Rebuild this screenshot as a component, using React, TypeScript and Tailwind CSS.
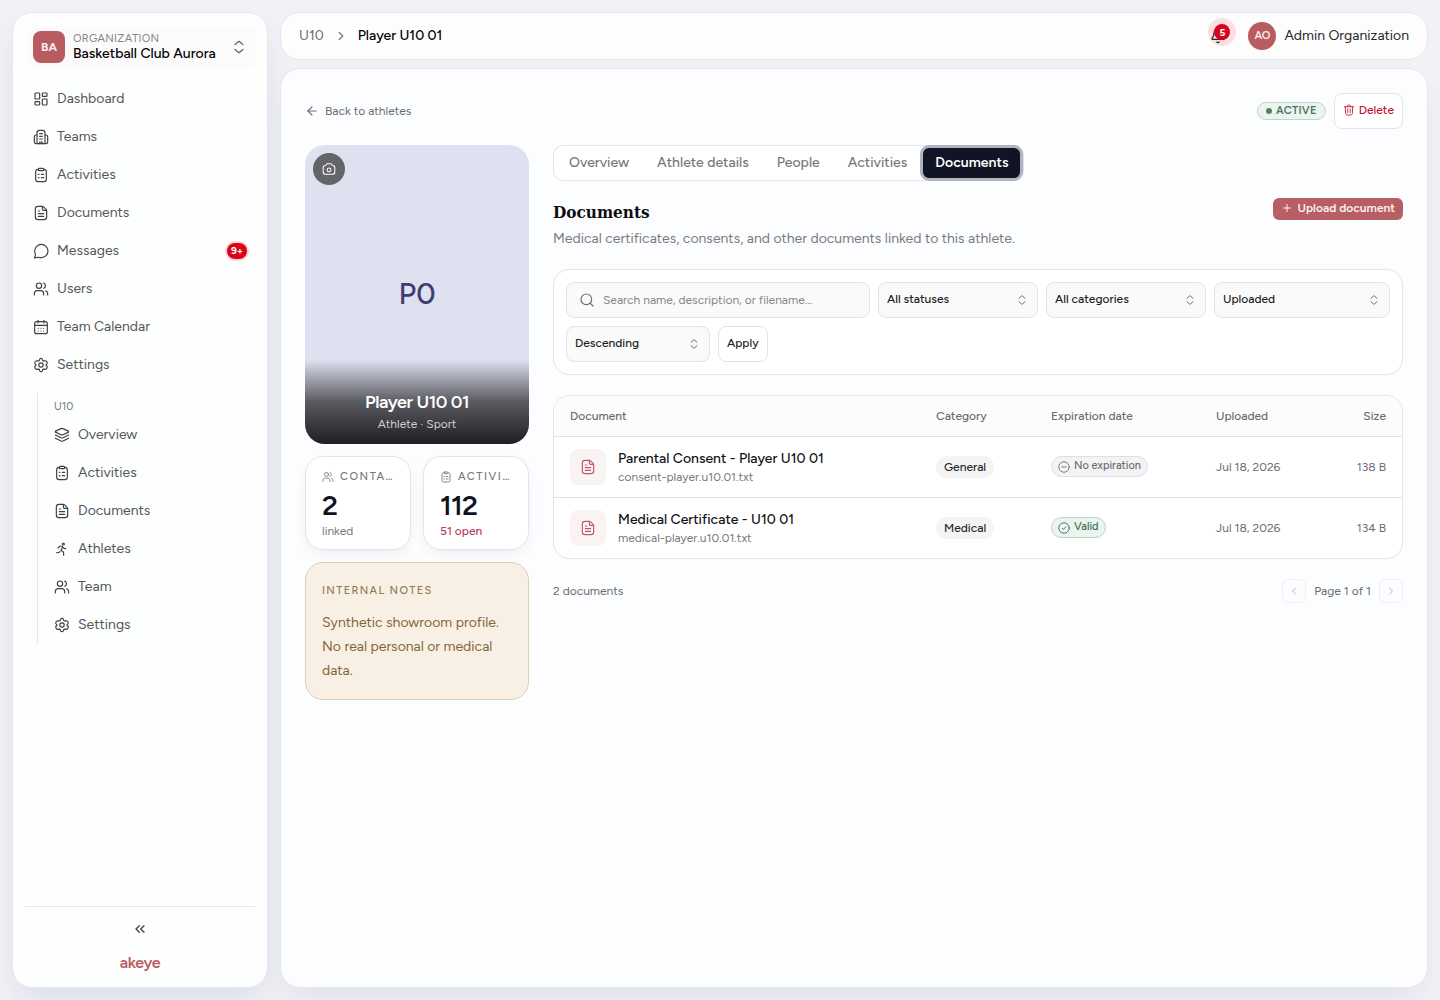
import type { ReactNode } from "react";
import {
  ArrowLeft,
  Bell,
  ChevronLeft,
  ChevronRight,
  ChevronsLeft,
  LayoutDashboard,
  Plus,
  Search,
} from "lucide-react";

type IconProps = { className?: string };

function Icon({ children, className = "size-4" }: { children: ReactNode; className?: string }) {
  return (
    <svg
      viewBox="0 0 24 24"
      fill="none"
      stroke="currentColor"
      strokeWidth={1.75}
      strokeLinecap="round"
      strokeLinejoin="round"
      className={`shrink-0 ${className}`}
      aria-hidden="true"
    >
      {children}
    </svg>
  );
}

const DashboardIcon = ({ className = "size-4" }: IconProps) => (
  <LayoutDashboard className={className} strokeWidth={1.75} />
);

const ClipboardIcon = ({ className }: IconProps) => (
  <Icon className={className}>
    <path d="M8 3.500H7.500C5 3.500 4 4.700 4 7v11.500C4 20.800 5.200 22 7.500 22h9c2.300 0 3.500-1.200 3.500-3.500V7c0-2.300-1-3.500-3.500-3.500H16" />
    <rect x="8" y="2" width="8" height="3.500" rx="1.500" />
    <path d="M12.500 11H16M12.500 16H16M8 11h1M8 16h1" />
  </Icon>
);

const BuildingIcon = ({ className }: IconProps) => (
  <Icon className={className}>
    <path d="M6 22V6c0-2.500 1-4 3.500-4h5C17 2 18 3.500 18 6v16" />
    <path d="M6 9H4.500C2.800 9 2 9.800 2 11.500v8C2 21.200 2.800 22 4.500 22h15c1.700 0 2.500-.8 2.500-2.500v-8C22 9.800 21.200 9 19.500 9H18" />
    <path d="M10 7h4M10 11h4M10 15h4M10 22v-2.500h4V22" />
  </Icon>
);

const FileIcon = ({ className }: IconProps) => (
  <Icon className={className}>
    <path d="M3.500 6c0-2.600 1.400-4 4-4h6.300c.8 0 1.500.3 2.100.9l3.700 3.700c.6.600.9 1.300.9 2.100V18c0 2.600-1.400 4-4 4h-9c-2.600 0-4-1.400-4-4z" />
    <path d="M14 2.500V6c0 1.400.6 2 2 2h4M8 17h8M8 13h8M8 9h2" />
  </Icon>
);

const ChatIcon = ({ className }: IconProps) => (
  <Icon className={className}>
    <path d="M12.500 22C18 22 22.500 17.500 22.500 12S18 2 12.500 2 2.500 6.500 2.500 12c0 1.600.3 2.900.9 4.200.4.800.4 1.300.2 2.100L2 22.500l4.300-1c.8-.2 1.300-.2 2.100.1 1.300.3 2.600.4 4.100.4z" />
  </Icon>
);

const UsersIcon = ({ className }: IconProps) => (
  <Icon className={className}>
    <circle cx="9" cy="7" r="4" />
    <path d="M2 21v-2c0-2.600 1.700-4.500 4.500-4.500h5c2.800 0 4.500 1.900 4.500 4.500v2" />
    <path d="M16 3.200a4 4 0 0 1 0 7.600M19 14.800c1.900.6 3 2.200 3 4.200v2" />
  </Icon>
);

const CalendarIcon = ({ className }: IconProps) => (
  <Icon className={className}>
    <rect x="2.500" y="4" width="19" height="18" rx="3" />
    <path d="M7.500 2v4M16.500 2v4M3 9.500h18M8 14h.01M12 14h.01M16 14h.01M8 18h.01M12 18h.01M16 18h.01" />
  </Icon>
);

const GearIcon = ({ className }: IconProps) => (
  <Icon className={className}>
    <circle cx="12" cy="12" r="3.300" />
    <path d="M13.900 3.200 14.500 5c.2.500.7.800 1.200.9l2.600-.3c1 0 1.600.3 2.100 1.100l.7 1.300c.5.900.4 1.600-.1 2.300l-1.300 1.100c-.4.400-.4.900 0 1.300l1.300 1.100c.5.700.6 1.400.1 2.300l-.7 1.300c-.5.800-1.100 1.100-2.100 1.100l-2.600-.3c-.5.100-1 .4-1.200.9l-.6 1.800c-.3.700-.8 1.100-1.900 1.100s-1.600-.4-1.900-1.100l-.6-1.800c-.2-.5-.7-.8-1.200-.9l-2.600.3c-1 0-1.600-.3-2.100-1.100l-.7-1.300c-.5-.9-.4-1.600.1-2.300l1.300-1.100c.4-.4.4-.9 0-1.300L3 10.300c-.5-.7-.6-1.400-.1-2.300l.7-1.300c.5-.8 1.100-1.100 2.100-1.100l2.600.3c.5-.1 1-.4 1.200-.9l.6-1.800c.3-.7.8-1.100 1.900-1.100s1.600.4 1.900 1.100z" />
  </Icon>
);

const LayersIcon = ({ className }: IconProps) => (
  <Icon className={className}>
    <path d="M10.600 2.400 3 5.800c-1.300.6-1.300 1.700 0 2.300l7.600 3.400c.9.400 1.900.4 2.800 0L21 8.100c1.300-.6 1.300-1.700 0-2.300l-7.600-3.400c-.9-.4-1.900-.4-2.800 0z" />
    <path d="m2 12 8.600 4.200c.9.400 1.900.4 2.800 0L22 12M2 16.800l8.600 4.300c.9.400 1.900.4 2.800 0l8.600-4.300" />
  </Icon>
);

const RunnerIcon = ({ className }: IconProps) => (
  <Icon className={className}>
    <circle cx="14" cy="4.500" r="1.500" />
    <path d="M6 10.500 8.500 8c1.500-.8 3-.5 4.500.5L10.500 14l3.500 2.500c.5 1.500.5 3 .5 5M13 9c.8 1.800 2.500 2.500 4.500 2.500M9 16c-1.300 2-2.500 2-5 1.500" />
  </Icon>
);

const CameraIcon = ({ className }: IconProps) => (
  <Icon className={className}>
    <path d="M2 9.500C2 7.500 3.200 6.300 5 6.200c1-.1 1.600-.5 2-1.300.6-1.300 1.300-1.900 2.600-1.900h4.800c1.300 0 2 .6 2.600 1.900.4.800 1 1.200 2 1.300 1.800.1 3 1.300 3 3.300V17c0 2.600-1.300 4-4 4H6c-2.700 0-4-1.400-4-4z" />
    <circle cx="12" cy="13.500" r="3.300" />
  </Icon>
);

const TrashIcon = ({ className }: IconProps) => (
  <Icon className={className}>
    <path d="m19.500 5.500-.8 12.600c-.2 2.700-1.200 3.900-3.700 3.900H9c-2.500 0-3.500-1.200-3.700-3.900L4.500 5.500M3 5.500h18M16 5.500l-.9-2C14.700 2.500 14 2 13 2h-2c-1 0-1.700.5-2.100 1.500l-.9 2M9.500 10v7M14.500 10v7" />
  </Icon>
);

const SortIcon = ({ className }: IconProps) => (
  <Icon className={className}>
    <path d="m6 8.500 5-4.400c.6-.5 1.400-.5 2 0l5 4.400M6 15.500l5 4.400c.6.500 1.400.5 2 0l5-4.400" />
  </Icon>
);

const mainNav = [
  { label: "Dashboard", icon: DashboardIcon },
  { label: "Teams", icon: BuildingIcon },
  { label: "Activities", icon: ClipboardIcon },
  { label: "Documents", icon: FileIcon },
  { label: "Messages", icon: ChatIcon, badge: "9+" },
  { label: "Users", icon: UsersIcon },
  { label: "Team Calendar", icon: CalendarIcon },
  { label: "Settings", icon: GearIcon },
];

const teamNav = [
  { label: "Overview", icon: LayersIcon },
  { label: "Activities", icon: ClipboardIcon },
  { label: "Documents", icon: FileIcon },
  { label: "Athletes", icon: RunnerIcon },
  { label: "Team", icon: UsersIcon },
  { label: "Settings", icon: GearIcon },
];

const tabs = ["Overview", "Athlete details", "People", "Activities", "Documents"];

const documents = [
  {
    title: "Parental Consent - Player U10 01",
    file: "consent-player.u10.01.txt",
    category: "General",
    valid: false,
    uploaded: "Jul 18, 2026",
    size: "138 B",
  },
  {
    title: "Medical Certificate - U10 01",
    file: "medical-player.u10.01.txt",
    category: "Medical",
    valid: true,
    uploaded: "Jul 18, 2026",
    size: "134 B",
  },
];

type NavItem = { label: string; icon: (props: IconProps) => ReactNode; badge?: string };

function NavLink({ label, icon: ItemIcon, badge }: NavItem) {
  return (
    <a href="#" className="flex h-9 items-center gap-2 px-2 text-sm text-[#55565a]">
      <ItemIcon className="size-4 text-[#3f4044]" />
      <span className="flex-1">{label}</span>
      {badge && (
        <span className="flex h-4 items-center rounded-full bg-[#d9041c] px-1 text-[10px] font-bold text-white ring-2 ring-[#fbd5d9]">
          {badge}
        </span>
      )}
    </a>
  );
}

function Sidebar() {
  return (
    <aside className="flex w-64 shrink-0 flex-col rounded-[20px] border border-[#e6e7ec] bg-[#fdfefe] px-3 shadow-[0_16px_32px_-8px_rgba(60,70,110,0.14)]">
      <button className="ml-1 mt-[13px] flex items-center gap-2 rounded-md bg-[#fbfbfb] px-1 py-[5px] text-left">
        <span className="flex size-8 items-center justify-center rounded-lg bg-[#b85c62] text-xs font-bold text-[#fdeeee]">
          BA
        </span>
        <span className="flex-1">
          <span className="block text-[11px] leading-[14px] tracking-wide text-[#85868a]">ORGANIZATION</span>
          <span className="block text-sm leading-4 font-medium text-black">Basketball Club Aurora</span>
        </span>
        <SortIcon className="mr-1 size-4 text-[#55565a]" />
      </button>

      <nav className="ml-1 mt-[13px] flex flex-col gap-0.5 pr-1 [&>a]:px-1">
        {mainNav.map((item) => (
          <NavLink key={item.label} {...item} />
        ))}
      </nav>

      {/* Selected team */}
      <div className="mt-2.5 ml-3 border-l border-[#e3e4e8] pl-2">
        <p className="flex h-6 items-end pl-2 text-[11px] leading-5 text-[#7a7b80]">U10</p>
        <nav className="flex flex-col gap-0.5">
          {teamNav.map((item) => (
            <NavLink key={item.label} {...item} />
          ))}
        </nav>
      </div>

      <div className="mt-auto flex flex-col items-center border-t border-[#e6e7ea] py-3.5">
        <button aria-label="Collapse sidebar" className="text-[#3f4044]">
          <ChevronsLeft className="size-4" />
        </button>
        <a href="#" className="mt-4 text-base leading-5 font-semibold tracking-tight text-[#b85c62]">
          akeye
        </a>
      </div>
    </aside>
  );
}

function Header() {
  return (
    <header className="flex h-12 items-center justify-between rounded-[20px] border border-[#e6e7ec] bg-[#fdfdfe] px-[18px]">
      <nav aria-label="Breadcrumb" className="flex items-center gap-2.5 text-sm">
        <a href="#" className="text-[#6b6c71]">U10</a>
        <ChevronRight className="size-3.5 text-[#77787d]" />
        <span className="font-medium text-black">Player U10 01</span>
      </nav>
      <div className="flex items-center">
        <button aria-label="Notifications, 5 unread" className="relative mr-[22px] flex size-4 items-center justify-center">
          <span className="absolute -top-2.5 -right-2.5 size-7 rounded-full bg-[#fbdfe3]" />
          <Bell className="relative size-4 text-[#26272b]" strokeWidth={2} />
          <span className="absolute -top-1 -right-1 flex size-4 items-center justify-center rounded-full bg-[#d9041c] text-[10px] font-bold text-white">
            5
          </span>
        </button>
        <button className="flex items-center gap-2 text-sm text-[#26272b]">
          <span className="flex size-7 items-center justify-center rounded-full bg-[#b85c62] text-[11px] font-semibold text-[#fdeeee]">
            AO
          </span>
          Admin Organization
        </button>
      </div>
    </header>
  );
}

type StatProps = { icon: ReactNode; label: string; value: string; note: string; noteClass: string };

function StatCard({ icon, label, value, note, noteClass }: StatProps) {
  return (
    <div className="min-w-0 rounded-[18px] border border-[#e2e4ea] bg-white px-4 pt-3 pb-2.5 shadow-[0_6px_16px_-6px_rgba(40,50,90,0.12)]">
      <div className="flex items-center gap-1.5 text-[#77787d]">
        {icon}
        <span className="truncate text-[11px] leading-4 font-medium tracking-[0.14em] uppercase">{label}</span>
      </div>
      <p className="mt-0.5 text-[28px] leading-9 font-semibold tracking-tight text-[#0f1222]">{value}</p>
      <p className={`text-xs leading-4 ${noteClass}`}>{note}</p>
    </div>
  );
}

function ProfileColumn() {
  return (
    <div className="flex w-56 shrink-0 flex-col gap-3">
      <div className="relative flex aspect-3/4 items-center justify-center overflow-hidden rounded-[20px] bg-[#dfe0f0]">
        <span className="text-[30px] leading-10 font-medium text-[#3b3f70]">P0</span>
        <button
          aria-label="Change photo"
          className="absolute top-2 left-2 flex size-8 items-center justify-center rounded-full bg-[#646569] text-white"
        >
          <CameraIcon className="size-3.5" />
        </button>
        <div className="absolute inset-x-0 bottom-0 bg-linear-to-t from-[#1f1f22] via-[#1f1f22]/70 to-transparent px-4 pt-7 pb-3 text-center">
          <h1 className="text-lg leading-7 font-semibold tracking-tight text-white">Player U10 01</h1>
          <p className="text-xs leading-4 text-[#d0d0d3]">Athlete · Sport</p>
        </div>
      </div>

      <div className="grid grid-cols-2 gap-3">
        <StatCard
          icon={<UsersIcon className="size-3" />}
          label="Contacts"
          value="2"
          note="linked"
          noteClass="text-[#77787d]"
        />
        <StatCard
          icon={<ClipboardIcon className="size-3" />}
          label="Activities"
          value="112"
          note="51 open"
          noteClass="font-medium text-[#b9405a]"
        />
      </div>

      <section className="rounded-[18px] border border-[#dccfae] bg-[#f8f0e5] px-4 pt-5 pb-4">
        <h2 className="text-[11px] leading-4 font-medium tracking-[0.12em] text-[#937b50] uppercase">
          Internal notes
        </h2>
        <p className="mt-3 text-sm leading-6 text-[#856537]">
          Synthetic showroom profile. No real personal or medical data.
        </p>
      </section>
    </div>
  );
}

function FilterSelect({ label, value, className }: { label: string; value: string; className: string }) {
  return (
    <div className={`relative ${className}`}>
      <select
        aria-label={label}
        className="h-9 w-full appearance-none rounded-lg border border-[#e3e4e6] bg-[#fafafa] px-2 pb-0.5 text-xs font-medium text-[#1c1d20]"
      >
        <option>{value}</option>
      </select>
      <SortIcon className="pointer-events-none absolute top-3 right-2.5 size-3 text-[#55565a]" />
    </div>
  );
}

function Filters() {
  return (
    <form
      onSubmit={(e) => e.preventDefault()}
      className="mt-5 flex flex-wrap gap-2 rounded-[16px] border border-[#e2e4e8] bg-white p-3"
    >
      <div className="flex h-9 min-w-60 flex-1 items-center gap-2 rounded-lg border border-[#e3e4e6] bg-[#fafafa] px-3">
        <Search className="size-4 text-[#6b6c71]" strokeWidth={1.75} />
        <input
          type="search"
          aria-label="Search documents"
          placeholder="Search name, description, or filename…"
          className="min-w-0 flex-1 bg-transparent text-xs outline-none placeholder:text-[#85868a]"
        />
      </div>
      <FilterSelect label="Status" value="All statuses" className="w-40" />
      <FilterSelect label="Category" value="All categories" className="w-40" />
      <FilterSelect label="Sort by" value="Uploaded" className="w-44" />
      <div className="flex w-full gap-2">
        <FilterSelect label="Order" value="Descending" className="w-36" />
        <button className="h-9 rounded-lg border border-[#e3e4e6] bg-white px-2 pb-0.5 text-xs font-medium text-[#1c1d20]">
          Apply
        </button>
      </div>
    </form>
  );
}

function ValidityBadge({ valid }: { valid: boolean }) {
  return (
    <span
      className={`inline-flex h-[21px] items-center gap-1 rounded-full border px-1.5 text-[11px] font-medium ${
        valid ? "border-[#b8d4c4] bg-[#e9f5ee] text-[#3f6b52]" : "border-[#dfdfe3] bg-[#f3f3f5] text-[#6b6c71]"
      }`}
    >
      <Icon className="size-3">
        <circle cx="12" cy="12" r="10.500" />
        {valid ? <path d="m8.500 12.500 2.300 2.300 4.700-5" /> : <path d="M7.500 12h9" />}
      </Icon>
      {valid ? "Valid" : "No expiration"}
    </span>
  );
}

function DocumentsTable() {
  return (
    <div className="mt-5 overflow-hidden rounded-[16px] border border-[#e2e4e8] bg-white">
      <table className="w-full table-fixed text-left text-xs text-[#6b6c71]">
        <thead className="bg-[#fcfcfc]">
          <tr className="h-10 border-b border-[#e2e3e6] [&>th]:px-4 [&>th]:font-medium">
            <th>Document</th>
            <th className="w-[115px]">Category</th>
            <th className="w-[165px]">Expiration date</th>
            <th className="w-[101px]">Uploaded</th>
            <th className="w-[101px] text-right">Size</th>
          </tr>
        </thead>
        <tbody>
          {documents.map((doc) => (
            <tr key={doc.file} className="h-[61px] border-b border-[#e2e3e6] last:border-b-0 [&>td]:px-4">
              <td>
                <div className="flex items-center gap-3">
                  <span className="flex size-9 items-center justify-center rounded-lg bg-[#f9f3f4] text-[#b85c68]">
                    <FileIcon className="size-4" />
                  </span>
                  <div>
                    <a href="#" className="block text-sm leading-5 font-medium text-[#101114]">
                      {doc.title}
                    </a>
                    <p className="text-xs leading-4 text-[#77787d]">{doc.file}</p>
                  </div>
                </div>
              </td>
              <td>
                <span className="inline-flex h-[22px] items-center rounded-full bg-[#f4f4f5] px-2 font-medium text-[#26272b]">
                  {doc.category}
                </span>
              </td>
              <td>
                <ValidityBadge valid={doc.valid} />
              </td>
              <td className="whitespace-nowrap">{doc.uploaded}</td>
              <td className="text-right">{doc.size}</td>
            </tr>
          ))}
        </tbody>
      </table>
    </div>
  );
}

function DocumentsPanel() {
  return (
    <div className="min-w-0 flex-1">
      <div
        role="tablist"
        className="inline-flex h-9 items-center gap-1 rounded-[10px] border border-[#e2e4ea] bg-white px-[3px] align-top"
      >
        {tabs.map((tab) =>
          tab === "Documents" ? (
            <button
              key={tab}
              role="tab"
              aria-selected="true"
              className="h-[30px] rounded-md bg-[#101425] px-3 text-sm font-semibold text-white ring-3 ring-[#b1b3bf]"
            >
              {tab}
            </button>
          ) : (
            <button
              key={tab}
              role="tab"
              aria-selected="false"
              className="h-[30px] rounded-md px-3 text-sm font-medium text-[#77787d]"
            >
              {tab}
            </button>
          ),
        )}
      </div>

      <div className="mt-[17px] flex items-start justify-between">
        <div>
          <h2 className="font-['Roboto_Slab','DejaVu_Serif_Condensed','DejaVu_Serif',serif] text-[17px] leading-7 font-semibold text-[#0c0d10]">
            Documents
          </h2>
          <p className="mt-[3px] text-sm leading-5 text-[#7a7b80]">
            Medical certificates, consents, and other documents linked to this athlete.
          </p>
        </div>
        <button className="flex h-[22px] items-center gap-1 rounded-md bg-[#b85f65] px-2 pb-0.5 text-xs font-semibold text-[#fdf0f0]">
          <Plus className="size-3" />
          Upload document
        </button>
      </div>

      <Filters />
      <DocumentsTable />

      <div className="mt-5 flex items-center justify-between text-xs text-[#6b6c71]">
        <p>2 documents</p>
        <div className="flex items-center gap-2">
          <button
            disabled
            aria-label="Previous page"
            className="flex size-6 items-center justify-center rounded-md border border-[#eeeff2] text-[#b4b5b9]"
          >
            <ChevronLeft className="size-3" />
          </button>
          <span>Page 1 of 1</span>
          <button
            disabled
            aria-label="Next page"
            className="flex size-6 items-center justify-center rounded-md border border-[#eeeff2] text-[#b4b5b9]"
          >
            <ChevronRight className="size-3" />
          </button>
        </div>
      </div>
    </div>
  );
}

export default function App() {
  return (
    <div className="flex min-h-screen gap-3 bg-[#f1f2f6] p-3 font-['Figtree','Lato',sans-serif]">
      <Sidebar />
      <div className="flex min-w-0 flex-1 flex-col gap-2">
        <Header />
        <main className="flex-1 rounded-[20px] border border-[#e6e7ec] bg-[#fcfdfe] p-6 shadow-[0_16px_32px_-8px_rgba(60,70,110,0.1)]">
          <div className="flex items-center justify-between">
            <a href="#" className="flex items-center gap-1.5 text-xs text-[#6b6c71]">
              <ArrowLeft className="size-3.5" />
              Back to athletes
            </a>
            <div className="flex items-center gap-2">
              <span className="flex h-[18px] items-center gap-1 rounded-full border border-[#bdd6ca] bg-[#ebf4ef] px-2 text-[11px] font-semibold tracking-wide text-[#4a7560]">
                <span className="size-1.5 rounded-full bg-[#4a8268]" />
                ACTIVE
              </span>
              <button className="flex h-9 items-center gap-1 rounded-lg border border-[#e3e4e8] bg-white px-2 pb-0.5 text-xs font-medium text-[#c2142e]">
                <TrashIcon className="size-3" />
                Delete
              </button>
            </div>
          </div>

          <div className="mt-4 flex gap-6">
            <ProfileColumn />
            <DocumentsPanel />
          </div>
        </main>
      </div>
    </div>
  );
}
